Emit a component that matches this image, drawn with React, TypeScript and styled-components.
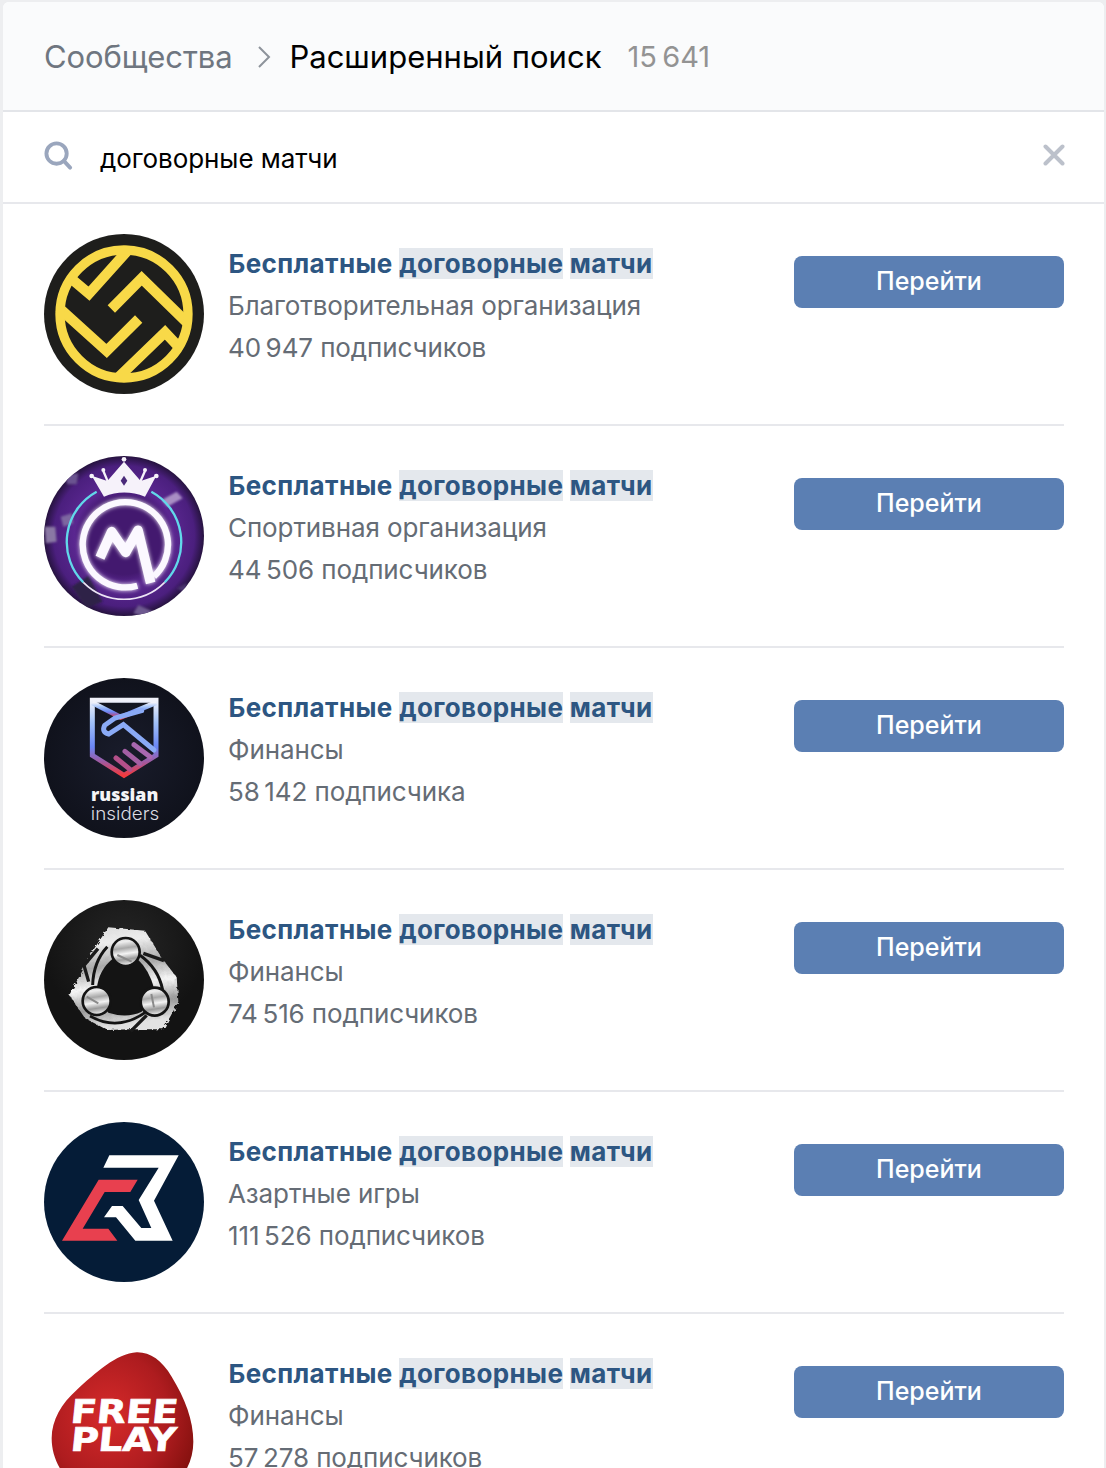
import React from "react";
import styled, { createGlobalStyle } from "styled-components";

const Global = createGlobalStyle`
  html, body { margin: 0; padding: 0; background: #edeef0; }
  body { font-family: Inter, "Noto Sans", "Liberation Sans", sans-serif; -webkit-font-smoothing: antialiased; }
`;

const Page = styled.div`
  height: 100vh;
  overflow: hidden;
  padding: 2px 2px 0 3px;
  box-sizing: border-box;
`;
const Panel = styled.main`
  background: #fff;
  border-radius: 6px 6px 0 0;
  overflow: hidden;
`;
const Header = styled.header`
  height: 108px;
  padding: 0 41px;
  background: #fafbfc;
  border-bottom: 2px solid #e3e5e9;
  display: flex;
  align-items: center;
`;
const Crumb = styled.span`
  font-size: 31px;
  color: #6f7680;
  letter-spacing: -0.1px;
`;
const Current = styled.h1`
  margin: 0;
  font-size: 31px;
  font-weight: 400;
  color: #000;
`;
const Count = styled.span`
  font-size: 29px;
  color: #939393;
  margin-left: 26px;
`;
const Chevron = styled.svg`
  width: 14px;
  height: 24px;
  margin: 2px 18px 0 25px;
  flex: none;
`;
const SearchBar = styled.div`
  height: 90px;
  border-bottom: 2px solid #e7e8ec;
  display: flex;
  align-items: center;
  padding: 0 39px 0 41px;
`;
const SearchIcon = styled.svg`
  width: 29px;
  height: 29px;
  flex: none;
  margin-top: -4px;
`;
const Query = styled.span`
  flex: 1;
  margin-left: 27px;
  font-size: 26px;
  color: #000;
  padding-top: 3px;
  letter-spacing: -0.08px;
`;
const ClearIcon = styled.svg`
  width: 22px;
  height: 22px;
  flex: none;
  margin-top: -5px;
`;
const List = styled.div`
  padding: 0 40px 0 41px;
`;
const Row = styled.article`
  display: flex;
  align-items: flex-start;
  padding-top: 30px;
  height: 190px;
  border-bottom: 2px solid #e7e8ec;
`;
const Avatar = styled.svg`
  width: 160px;
  height: 160px;
  flex: none;
  display: block;
`;
const Info = styled.div`
  flex: 1;
  margin: 9px 0 0 24px;
  font-size: 26px;
  line-height: 42px;
  color: #656c75;
  letter-spacing: -0.1px;
`;
const Title = styled.div`
  font-weight: 700;
  color: #2d5682;
  letter-spacing: 0.37px;
  margin-left: 0.5px;
`;
const Mark = styled.span`
  background: #e4e8ed;
`;
const Line = styled.div``;
const Go = styled.button`
  width: 270px;
  height: 52px;
  margin-top: 22px;
  padding: 0 0 2px;
  flex: none;
  border: 0;
  border-radius: 8px;
  background: #5b7fb3;
  color: #fff;
  font: 500 25px Inter, sans-serif;
`;

const Logo1 = () => (
  <Avatar viewBox="42 27 480 480">
    <defs>
      <clipPath id="l1"><circle cx="282" cy="267" r="205" /></clipPath>
    </defs>
    <circle cx="282" cy="267" r="240" fill="#1e1e1c" />
    <g clipPath="url(#l1)" fill="none" stroke="#f8d948" strokeWidth="31">
      <path d="M306 62 L177 206 L120 158" />
      <path d="M244 252 L335 160 L480 302" />
      <path d="M86 248 L230 378 L326 282" />
      <path d="M258 464 L405 322 L452 372" />
    </g>
    <circle cx="282" cy="267" r="192" fill="none" stroke="#f8d948" strokeWidth="28" />
  </Avatar>
);

const Logo2 = () => (
  <Avatar viewBox="42 33 480 480">
    <defs>
      <radialGradient id="l2">
        <stop offset="0" stopColor="#43196f" />
        <stop offset="0.48" stopColor="#43196f" />
        <stop offset="0.62" stopColor="#5a2790" />
        <stop offset="0.88" stopColor="#4b1f7e" />
        <stop offset="1" stopColor="#26133f" />
      </radialGradient>
      <filter id="l2b"><feGaussianBlur stdDeviation="3" /></filter>
      <filter id="l2g" x="-20%" y="-20%" width="140%" height="140%">
        <feGaussianBlur stdDeviation="6" result="b" />
        <feMerge><feMergeNode in="b" /><feMergeNode in="SourceGraphic" /></feMerge>
      </filter>
      <clipPath id="l2c"><circle cx="282" cy="273" r="240" /></clipPath>
    </defs>
    <circle cx="282" cy="273" r="240" fill="url(#l2)" />
    <g clipPath="url(#l2c)" filter="url(#l2b)">
      <path d="M395 165 L440 140 L458 160 L412 185 Z" fill="#a98fc4" />
      <path d="M44 245 L76 245 L80 290 L48 295 Z" fill="#8a78a4" />
      <path d="M105 90 L145 85 L140 118 L112 118 Z" fill="#6b5290" />
      <path d="M92 215 L125 205 L130 235 L100 245 Z" fill="#7d66a0" />
      <path d="M125 425 L175 392 L218 470 L170 490 Z" fill="#2f2447" />
      <path d="M310 505 L325 480 L370 500 L360 520 Z" fill="#6e5a90" />
      <path d="M440 430 L470 415 L470 445 Z" fill="#4b3570" />
    </g>
    <path d="M364 140 A172 172 0 0 1 404 412" fill="none" stroke="#62d8ea" strokeWidth="7" />
    <path d="M200 140 A172 172 0 0 0 160 412" fill="none" stroke="#62d8ea" strokeWidth="7" />
    <path d="M160 412 A172 172 0 0 0 404 412" fill="none" stroke="#ece4f5" strokeWidth="5" />
    <path d="M185 92 L232 108 L282 50 L332 108 L379 92 L345 155 Q282 130 222 155 Z" fill="#f6f2fa" />
    <circle cx="185" cy="93" r="7" fill="#f6f2fa" />
    <circle cx="220" cy="75" r="6" fill="#f6f2fa" />
    <circle cx="282" cy="43" r="7" fill="#f6f2fa" />
    <circle cx="345" cy="75" r="6" fill="#f6f2fa" />
    <circle cx="379" cy="93" r="7" fill="#f6f2fa" />
    <path d="M220 78 L236 116 M345 78 L328 116" stroke="#f6f2fa" strokeWidth="7" />
    <path d="M282 92 L292 107 L282 122 L272 107 Z" fill="#4a2a7a" />
    <g filter="url(#l2g)" fill="none" stroke="#fbf8ff" strokeLinejoin="round">
      <path d="M322 422 A128 128 0 1 1 372 394" strokeWidth="19" />
      <path d="M210 338 L245 260 L287 322 L324 256 L362 414" strokeWidth="29" />
    </g>
  </Avatar>
);

const Logo3 = () => (
  <Avatar viewBox="42 30 480 480">
    <defs>
      <linearGradient id="l3" x1="0" y1="0" x2="0" y2="1">
        <stop offset="0" stopColor="#f1f2fa" />
        <stop offset="0.3" stopColor="#a0c0f8" />
        <stop offset="0.62" stopColor="#6a86f5" />
        <stop offset="0.82" stopColor="#a05aa0" />
        <stop offset="1" stopColor="#f23a3e" />
      </linearGradient>
      <radialGradient id="l3b">
        <stop offset="0" stopColor="#191c2b" />
        <stop offset="1" stopColor="#10121c" />
      </radialGradient>
    </defs>
    <circle cx="282" cy="270" r="240" fill="url(#l3b)" />
    <g fill="none" stroke="url(#l3)" strokeWidth="15" strokeLinejoin="miter">
      <path d="M187 97 H378 V262 L282 322 L187 262 Z" />
      <path d="M187 104 L272 148 L378 104" />
    </g>
    <g fill="none" strokeLinecap="round" stroke="#8aaaf6" strokeWidth="15">
      <path d="M335 128 L255 150 L224 172 Q214 192 236 198 L280 170 L372 246" />
      <path d="M312 230 L360 266" stroke="#a868b0" />
      <path d="M285 250 L330 286" stroke="#a45fa4" />
      <path d="M258 270 L300 304" stroke="#b4508a" />
    </g>
    <text x="284" y="400" textAnchor="middle" textLength="202" lengthAdjust="spacingAndGlyphs" fontFamily="Open Sans, sans-serif" fontWeight="800" fontSize="54" fill="#f4f4f6">russian</text>
    <text x="285" y="456" textAnchor="middle" textLength="205" lengthAdjust="spacingAndGlyphs" fontFamily="Inter, sans-serif" fontWeight="300" fontSize="54" fill="#dcdce2">insiders</text>
  </Avatar>
);

const Logo4 = () => (
  <Avatar viewBox="42 30 480 480">
    <defs>
      <linearGradient id="l4" x1="0" y1="0" x2="0.15" y2="1">
        <stop offset="0" stopColor="#d8d8d8" />
        <stop offset="0.2" stopColor="#ededed" />
        <stop offset="0.42" stopColor="#a8a8a8" />
        <stop offset="0.62" stopColor="#f4f4f4" />
        <stop offset="0.82" stopColor="#9a9a9a" />
        <stop offset="1" stopColor="#e2e2e2" />
      </linearGradient>
      <radialGradient id="l4b" cx="0.5" cy="0.3">
        <stop offset="0" stopColor="#262626" />
        <stop offset="1" stopColor="#131313" />
      </radialGradient>
      <filter id="l4r" x="-5%" y="-5%" width="110%" height="110%">
        <feTurbulence type="fractalNoise" baseFrequency="0.09" numOctaves="2" seed="4" />
        <feDisplacementMap in="SourceGraphic" scale="14" />
      </filter>
    </defs>
    <circle cx="282" cy="270" r="240" fill="url(#l4b)" />
    <path d="M235 112 L345 122 L398 208 L440 262 L445 335 L400 418 L300 418 L232 420 L165 385 L118 315 L165 228 L190 180 Z" fill="url(#l4)" filter="url(#l4r)" />
    <path d="M402 212 L340 190 M302 424 L350 376 M204 176 L162 226 L176 275" fill="none" stroke="#1a1a1a" strokeWidth="10" />
    <path d="M250 205 Q205 240 200 300 L235 368 Q290 386 335 365 L372 295 Q358 240 320 205 Z" fill="#141414" />
    <path d="M232 170 Q190 215 188 285" fill="none" stroke="#141414" strokeWidth="9" />
    <path d="M330 196 Q385 235 398 300" fill="none" stroke="#141414" strokeWidth="9" />
    <path d="M180 378 Q262 425 345 368" fill="none" stroke="#141414" strokeWidth="8" />
    <g stroke="#141414" strokeWidth="8" fill="url(#l4)">
      <circle cx="287" cy="186" r="42" />
      <circle cx="200" cy="333" r="42" />
      <circle cx="374" cy="335" r="42" />
    </g>
    <path d="M262 195 L305 215 M364 312 L372 352 M170 320 L205 340" stroke="#8a8a8a" strokeWidth="6" />
  </Avatar>
);

const Logo5 = () => (
  <Avatar viewBox="42 30 480 480">
    <circle cx="282" cy="270" r="240" fill="#051c37" />
    <path d="M206 203 H323 L301 240 H224 L158 350 H235 L262 386 H96 Z" fill="#e8404f" />
    <path d="M238 130 H446 L372 266 L428 386 H316 L258 316 H222 L246 282 H278 L334 348 H364 L326 264 L386 167 H220 Z" fill="#ffffff" />
  </Avatar>
);

const Logo6 = () => (
  <Avatar viewBox="42 42 480 480">
    <defs>
      <radialGradient id="l6" cx="0.4" cy="0.42" r="0.65">
        <stop offset="0" stopColor="#d62a2a" />
        <stop offset="0.65" stopColor="#ae1c1f" />
        <stop offset="1" stopColor="#86110f" />
      </radialGradient>
    </defs>
    <path d="M320 67 C360 66 395 90 425 140 C465 205 490 270 490 335 C490 440 400 520 282 520 C160 520 65 430 65 325 C65 270 95 220 140 180 C195 130 260 70 320 67 Z" fill="url(#l6)" />
    <g fill="#fff" stroke="#fff" strokeWidth="2" fontFamily="DejaVu Sans, sans-serif" fontWeight="700" fontSize="98" textAnchor="middle">
      <text transform="translate(280 279) skewX(-6)" textLength="322" lengthAdjust="spacingAndGlyphs">FREE</text>
      <text transform="translate(277 364) skewX(-6)" textLength="316" lengthAdjust="spacingAndGlyphs">PLAY</text>
    </g>
  </Avatar>
);

const items = [
  { Logo: Logo1, kind: "Благотворительная организация", subs: "40\u2009947 подписчиков" },
  { Logo: Logo2, kind: "Спортивная организация", subs: "44\u2009506 подписчиков" },
  { Logo: Logo3, kind: "Финансы", subs: "58\u2009142 подписчика" },
  { Logo: Logo4, kind: "Финансы", subs: "74\u2009516 подписчиков" },
  { Logo: Logo5, kind: "Азартные игры", subs: "111\u2009526 подписчиков" },
  { Logo: Logo6, kind: "Финансы", subs: "57\u2009278 подписчиков" },
];

export default function App() {
  return (
    <Page>
      <Global />
      <Panel>
        <Header>
          <Crumb>Сообщества</Crumb>
          <Chevron viewBox="0 0 14 24" fill="none" stroke="#8d939b" strokeWidth="2">
            <path d="M2 2 L12 12 L2 22" />
          </Chevron>
          <Current>Расширенный поиск</Current>
          <Count>15{"\u2009"}641</Count>
        </Header>
        <SearchBar>
          <SearchIcon viewBox="0 0 30 30" fill="none" stroke="#9aa6bd" strokeWidth="4">
            <circle cx="13" cy="13" r="10.5" />
            <path d="M20.5 20.5 L27 27.5" strokeLinecap="round" />
          </SearchIcon>
          <Query>договорные матчи</Query>
          <ClearIcon viewBox="0 0 22 22" fill="none" stroke="#bcc1cb" strokeWidth="4" strokeLinecap="round">
            <path d="M2.5 2.5 L19.5 19.5 M19.5 2.5 L2.5 19.5" />
          </ClearIcon>
        </SearchBar>
        <List>
          {items.map(({ Logo, kind, subs }, i) => (
            <Row key={i}>
              <Logo />
              <Info>
                <Title>
                  Бесплатные <Mark>договорные</Mark> <Mark>матчи</Mark>
                </Title>
                <Line>{kind}</Line>
                <Line>{subs}</Line>
              </Info>
              <Go>Перейти</Go>
            </Row>
          ))}
        </List>
      </Panel>
    </Page>
  );
}
